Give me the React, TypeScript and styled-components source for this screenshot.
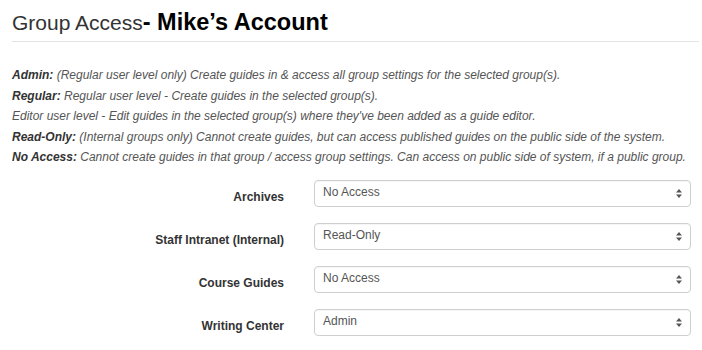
import { Fragment } from "react";
import styled, { createGlobalStyle } from "styled-components";

const GlobalStyle = createGlobalStyle`
  html, body {
    margin: 0;
    padding: 0;
    background: #fff;
    font-family: "Liberation Sans", Arial, Helvetica, sans-serif;
    color: #333;
  }
`;

const Page = styled.div`
  width: 702px;
  height: 350px;
  padding: 0 11px 0 12px;
  box-sizing: border-box;
  overflow: hidden;
`;

const Header = styled.h1`
  margin: 0 -8px 0 0;
  padding-top: 9px;
  height: 32px;
  border-bottom: 1px solid #e3e3e3;
  font-weight: normal;
  font-size: 21px;
  line-height: 27px;
  color: #333;
  white-space: nowrap;
`;

const Account = styled.span`
  font-weight: bold;
  font-size: 23.5px;
  color: #000;
`;

const Legend = styled.div`
  margin-top: 23px;
`;

const LegendLine = styled.p`
  margin: 0;
  font-size: 12px;
  font-style: italic;
  line-height: 20.6px;
  color: #555;
  white-space: nowrap;
`;

const Term = styled.b`
  font-weight: bold;
  color: #333;
`;

const Form = styled.div`
  margin-top: 12px;
  display: grid;
  grid-template-columns: 272px 1fr;
  column-gap: 30px;
  row-gap: 16px;
`;

const Label = styled.label`
  text-align: right;
  font-weight: bold;
  font-size: 12px;
  color: #333;
  padding-top: 10px;
  white-space: nowrap;
`;

const SelectWrap = styled.div`
  position: relative;
  height: 27px;
`;

const Select = styled.select`
  appearance: none;
  -webkit-appearance: none;
  width: 100%;
  height: 27px;
  box-sizing: border-box;
  border: 1px solid #cfcfcf;
  border-radius: 4px;
  background: #fff;
  padding: 0 0 2px 8px;
  font-family: "Liberation Sans", Arial, sans-serif;
  font-size: 12px;
  color: #555;
  box-shadow: inset 0 1px 1px rgba(0, 0, 0, 0.04);
`;

const Arrows = styled.svg`
  position: absolute;
  right: 9px;
  top: 9px;
  pointer-events: none;
`;

const legend: [string, string][] = [
  ["Admin:", " (Regular user level only) Create guides in & access all group settings for the selected group(s)."],
  ["Regular:", " Regular user level - Create guides in the selected group(s)."],
  ["", "Editor user level - Edit guides in the selected group(s) where they've been added as a guide editor."],
  ["Read-Only:", " (Internal groups only) Cannot create guides, but can access published guides on the public side of the system."],
  ["No Access:", " Cannot create guides in that group / access group settings. Can access on public side of system, if a public group."],
];

const groups = [
  { name: "Archives", value: "No Access" },
  { name: "Staff Intranet (Internal)", value: "Read-Only" },
  { name: "Course Guides", value: "No Access" },
  { name: "Writing Center", value: "Admin" },
];

const options = ["Admin", "Regular", "Editor", "Read-Only", "No Access"];

function App() {
  return (
    <Page>
      <GlobalStyle />
      <Header>
        Group Access<Account>- Mike’s Account</Account>
      </Header>
      <Legend>
        {legend.map(([term, text], i) => (
          <LegendLine key={i}>
            {term && <Term>{term}</Term>}
            {text}
          </LegendLine>
        ))}
      </Legend>
      <Form>
        {groups.map((g) => (
          <Fragment key={g.name}>
            <Label>{g.name}</Label>
            <SelectWrap>
              <Select defaultValue={g.value}>
                {options.map((o) => (
                  <option key={o}>{o}</option>
                ))}
              </Select>
              <Arrows width="6" height="9" viewBox="0 0 6 9">
                <path d="M3 0 L6 3.5 L0 3.5 Z" fill="#555" />
                <path d="M3 9 L6 5.5 L0 5.5 Z" fill="#555" />
              </Arrows>
            </SelectWrap>
          </Fragment>
        ))}
      </Form>
    </Page>
  );
}

export default App;
